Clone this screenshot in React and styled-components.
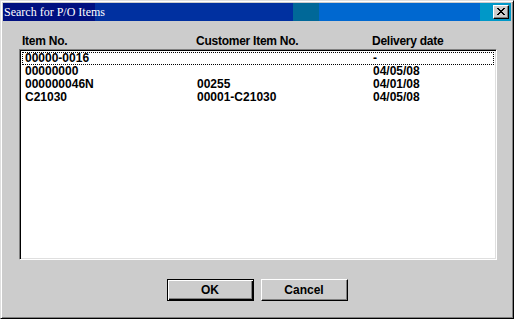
import React from "react";
import styled, { createGlobalStyle } from "styled-components";

const GlobalStyle = createGlobalStyle`
  html, body { margin: 0; padding: 0; background: #cccccc; }
  body { font-family: "Liberation Sans", Arial, sans-serif; }
`;

const items = [
  { item: "00000-0016", customer: "", date: "-" },
  { item: "00000000", customer: "", date: "04/05/08" },
  { item: "000000046N", customer: "00255", date: "04/01/08" },
  { item: "C21030", customer: "00001-C21030", date: "04/05/08" },
];

export default function App() {
  return (
    <>
      <GlobalStyle />
      <Window>
        <TitleBar>
          <Title>Search for P/O Items</Title>
          <CloseButton>
            <svg width="8" height="7" viewBox="0 0 8 7">
              <path d="M0 0h2v1h1v1h2V1h1V0h2v1H7v1H6v1H5v1h1v1h1v1h1v1H6V6H5V5H3v1H2v1H0V6h1V5h1V4h1V3H2V2H1V1H0z" fill="#000" />
            </svg>
          </CloseButton>
        </TitleBar>
        <Body>
          <HeaderRow>
            <HeaderCell>Item No.</HeaderCell>
            <HeaderCell>Customer Item No.</HeaderCell>
            <HeaderCell>Delivery date</HeaderCell>
          </HeaderRow>
          <ListBox>
            {items.map((row, i) => (
              <Row key={row.item} focused={i === 0}>
                <Cell>{row.item}</Cell>
                <Cell>{row.customer}</Cell>
                <Cell>{row.date}</Cell>
              </Row>
            ))}
          </ListBox>
          <Buttons>
            <Button isDefault>OK</Button>
            <Button>Cancel</Button>
          </Buttons>
        </Body>
      </Window>
    </>
  );
}

const Window = styled.div`
  width: 514px;
  height: 319px;
  box-sizing: border-box;
  background: #cccccc;
  border-style: solid;
  border-width: 1px;
  border-color: #dfdfdf #000000 #000000 #dfdfdf;
  box-shadow: inset 1px 1px 0 #ffffff, inset -1px -1px 0 #808080;
  padding: 2px;
  display: flex;
  flex-direction: column;
`;

const TitleBar = styled.div`
  height: 18px;
  display: flex;
  align-items: center;
  justify-content: space-between;
  padding: 0 2px 0 1px;
  background: linear-gradient(
    to right,
    #001080 0px,
    #001080 92px,
    #0030a0 92px,
    #0030a0 290px,
    #006898 290px,
    #006898 316px,
    #0068d0 316px,
    #0068d0 477px,
    #0098c8 477px
  );
`;

const Title = styled.span`
  font-family: "Liberation Serif", "Times New Roman", serif;
  font-size: 12px;
  color: #ffffff;
`;

const CloseButton = styled.div`
  width: 16px;
  height: 14px;
  box-sizing: border-box;
  background: #cccccc;
  border-style: solid;
  border-width: 1px;
  border-color: #ffffff #000000 #000000 #ffffff;
  box-shadow: inset -1px -1px 0 #808080;
  display: flex;
  align-items: center;
  justify-content: center;
  padding-bottom: 1px;
`;

const Body = styled.div`
  flex: 1;
  display: flex;
  flex-direction: column;
  padding: 14px 14px 0 16px;
`;

const HeaderRow = styled.div`
  display: grid;
  grid-template-columns: 174px 176px 1fr;
  padding-left: 3px;
  height: 13px;
  align-items: end;
  margin-bottom: 1px;
`;

const HeaderCell = styled.div`
  font-weight: bold;
  font-size: 12px;
  letter-spacing: -0.25px;
  color: #000000;
  line-height: 13px;
`;

const ListBox = styled.div`
  height: 211px;
  box-sizing: border-box;
  background: #ffffff;
  border-style: solid;
  border-width: 1px;
  border-color: #808080 #ffffff #ffffff #808080;
  box-shadow: inset 1px 1px 0 #000000, inset -1px -1px 0 #dfdfdf;
  padding: 2px;
`;

const Row = styled.div`
  display: grid;
  grid-template-columns: 172px 176px 1fr;
  height: 13px;
  padding-left: 3px;
  box-sizing: border-box;
  outline: ${(p) => (p.focused ? "1px dotted #000000" : "none")};
  outline-offset: -1px;
`;

const Cell = styled.div`
  font-weight: bold;
  font-size: 12px;
  line-height: 13px;
  color: #000000;
  white-space: nowrap;
`;

const Buttons = styled.div`
  display: flex;
  justify-content: center;
  gap: 7px;
  margin-top: 19px;
  padding-right: 2px;
`;

const Button = styled.div`
  width: 87px;
  height: 22px;
  box-sizing: border-box;
  display: flex;
  align-items: center;
  justify-content: center;
  font-weight: bold;
  font-size: 12px;
  color: #000000;
  background: #cccccc;
  border-style: solid;
  border-width: 1px;
  border-color: ${(p) =>
    p.isDefault ? "#000000" : "#ffffff #000000 #000000 #ffffff"};
  box-shadow: ${(p) =>
    p.isDefault
      ? "inset 1px 1px 0 #ffffff, inset -1px -1px 0 #000000, inset -2px -2px 0 #808080"
      : "inset -1px -1px 0 #808080"};
`;
